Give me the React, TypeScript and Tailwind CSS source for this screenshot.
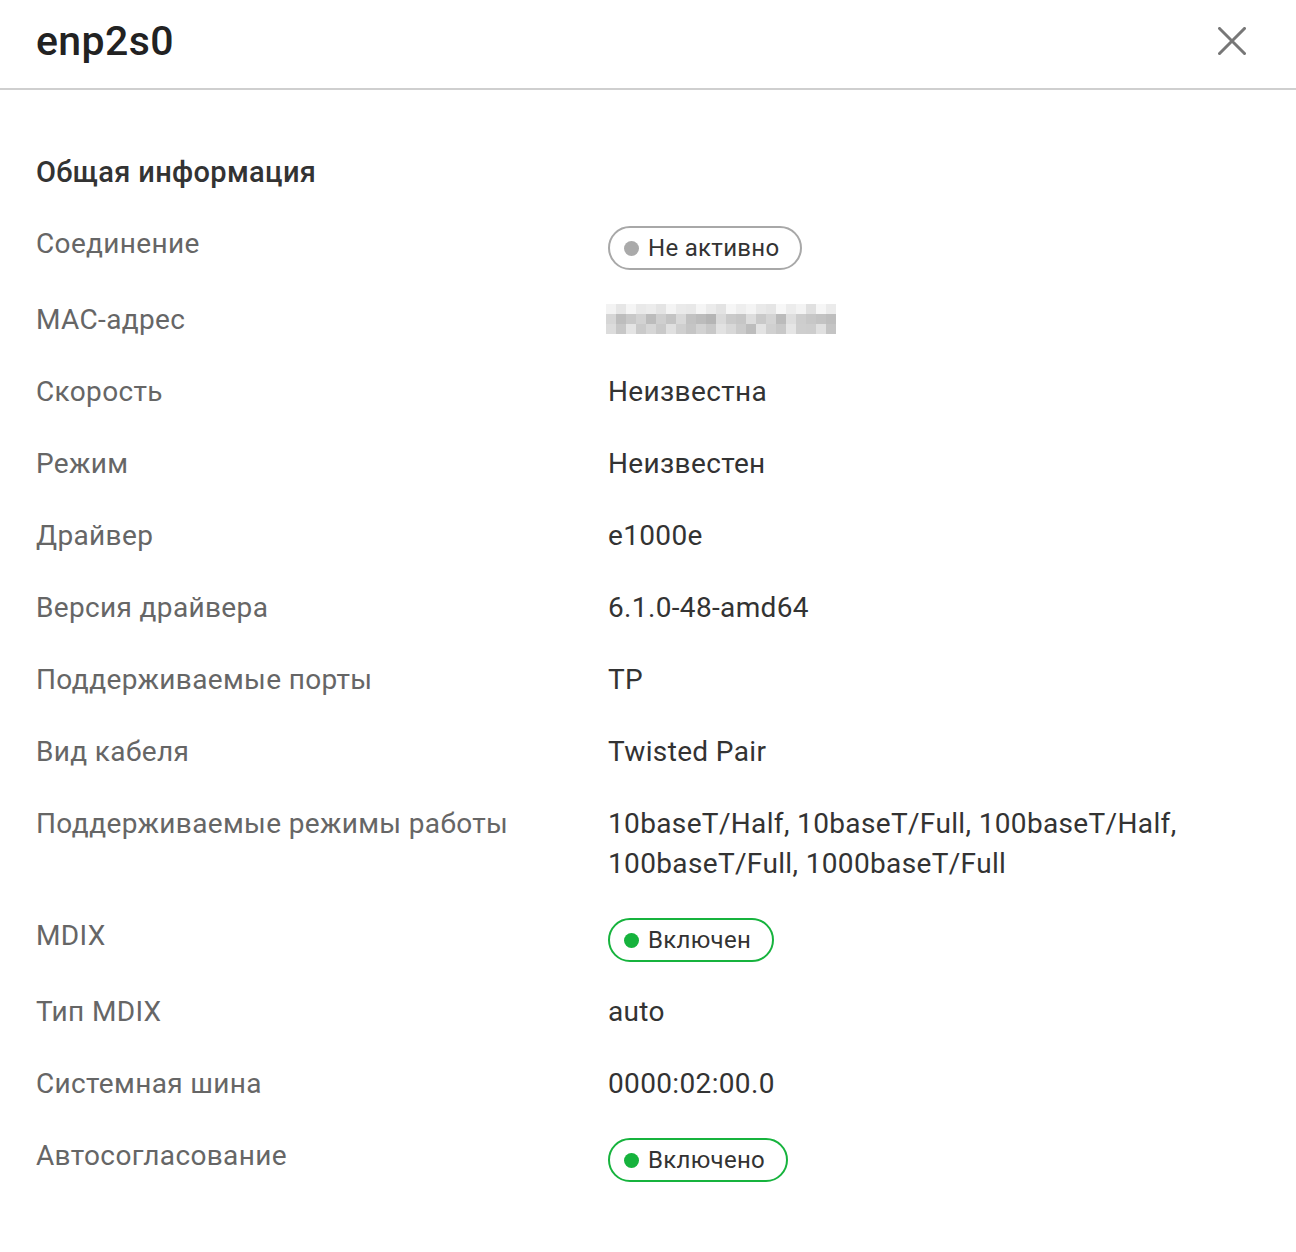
import React from 'react';

type Row = {
  label: string;
  value?: React.ReactNode;
  badge?: { text: string; on: boolean };
  mac?: boolean;
};

const ROWS: Row[] = [
  { label: 'Соединение', badge: { text: 'Не активно', on: false } },
  { label: 'MAC-адрес', mac: true },
  { label: 'Скорость', value: 'Неизвестна' },
  { label: 'Режим', value: 'Неизвестен' },
  { label: 'Драйвер', value: 'e1000e' },
  { label: 'Версия драйвера', value: '6.1.0-48-amd64' },
  { label: 'Поддерживаемые порты', value: 'TP' },
  { label: 'Вид кабеля', value: 'Twisted Pair' },
  {
    label: 'Поддерживаемые режимы работы',
    value: (
      <>
        10baseT/Half, 10baseT/Full, 100baseT/Half,
        <br />
        100baseT/Full, 1000baseT/Full
      </>
    ),
  },
  { label: 'MDIX', badge: { text: 'Включен', on: true } },
  { label: 'Тип MDIX', value: 'auto' },
  { label: 'Системная шина', value: '0000:02:00.0' },
  { label: 'Автосогласование', badge: { text: 'Включено', on: true } },
];

// pixelated (blurred) MAC address block
const MAC_SHADES = [
  ['#f3f3f3', '#e6e6e6', '#f5f5f5', '#e9e9e9', '#ececec', '#e4e4e4', '#f4f4f4', '#eaeaea', '#e8e8e8', '#f5f5f5', '#ebebeb', '#e3e3e3', '#f6f6f6', '#eeeeee', '#f4f4f4', '#e9e9e9', '#e5e5e5', '#f7f7f7', '#ececec', '#f3f3f3', '#e0e0e0', '#f6f6f6', '#ebebeb'],
  ['#d6d6d6', '#bdbdbd', '#c8c8c8', '#d2d2d2', '#bcbcbc', '#cfcfcf', '#c4c4c4', '#d9d9d9', '#c2c2c2', '#bcbcbc', '#b5b5b5', '#dadada', '#cacaca', '#c6c6c6', '#dddddd', '#c9c9c9', '#d4d4d4', '#bbbbbb', '#dedede', '#cdcdcd', '#c7c7c7', '#c3c3c3', '#bebebe'],
  ['#dcdcdc', '#c7c7c7', '#e4e4e4', '#cacaca', '#d6d6d6', '#c9c9c9', '#e0e0e0', '#cfcfcf', '#c5c5c5', '#d2d2d2', '#c8c8c8', '#e2e2e2', '#d8d8d8', '#cbcbcb', '#bdbdbd', '#e3e3e3', '#d0d0d0', '#c8c8c8', '#e5e5e5', '#cecece', '#cdcdcd', '#e0e0e0', '#c4c4c4'],
];

function MacBlur() {
  return (
    <svg width="230" height="30" viewBox="0 0 230 30" className="mt-[4px] -ml-[2px] block">
      {MAC_SHADES.map((row, r) =>
        row.map((c, i) => <rect key={`${r}-${i}`} x={i * 10} y={r * 10} width="10" height="10" fill={c} />)
      )}
    </svg>
  );
}

function Badge({ text, on }: { text: string; on: boolean }) {
  return (
    <span
      className={
        'mt-[2px] inline-flex h-[44px] items-center rounded-full border-2 pl-[14px] pr-[21px] text-[24px] tracking-[0.3px] text-[#333] ' +
        (on ? 'border-[#16b33d]' : 'border-[#a8a8a8]')
      }
    >
      <span className={'mr-[9px] h-[15px] w-[15px] rounded-full ' + (on ? 'bg-[#16b33d]' : 'bg-[#aaaaaa]')} />
      {text}
    </span>
  );
}

export default function App() {
  return (
    <div className="min-h-[1252px] w-[1296px] bg-white font-['Roboto','Liberation_Sans',sans-serif]">
      {/* Header */}
      <div className="flex h-[90px] items-center justify-between border-b-2 border-[#cfcfcf] pb-[6px] pl-[36px] pr-[50px]">
        <h1 className="text-[41px] font-medium leading-none tracking-[0.4px] text-[#222]">enp2s0</h1>
        <svg width="28" height="28" viewBox="0 0 28 28">
          <path d="M1.5 1.5 L26.5 26.5 M26.5 1.5 L1.5 26.5" stroke="#777" strokeWidth="3" strokeLinecap="square" />
        </svg>
      </div>

      {/* Content */}
      <div className="px-[36px] pt-[62px]">
        <h2 className="mb-[32px] text-[29px] font-medium leading-[40px] tracking-[0.35px] text-[#333]">Общая информация</h2>
        <div className="flex flex-col">
          {ROWS.map((row) => (
            <div key={row.label} className={'flex items-start ' + (row.badge ? 'pb-[30px]' : 'pb-[32px]')}>
              <div className="w-[572px] shrink-0 text-[28px] leading-[40px] tracking-[0.35px] text-[#666]">{row.label}</div>
              <div className="text-[28px] leading-[40px] tracking-[0.35px] text-[#333]">
                {row.badge ? <Badge text={row.badge.text} on={row.badge.on} /> : row.mac ? <MacBlur /> : row.value}
              </div>
            </div>
          ))}
        </div>
      </div>
    </div>
  );
}
